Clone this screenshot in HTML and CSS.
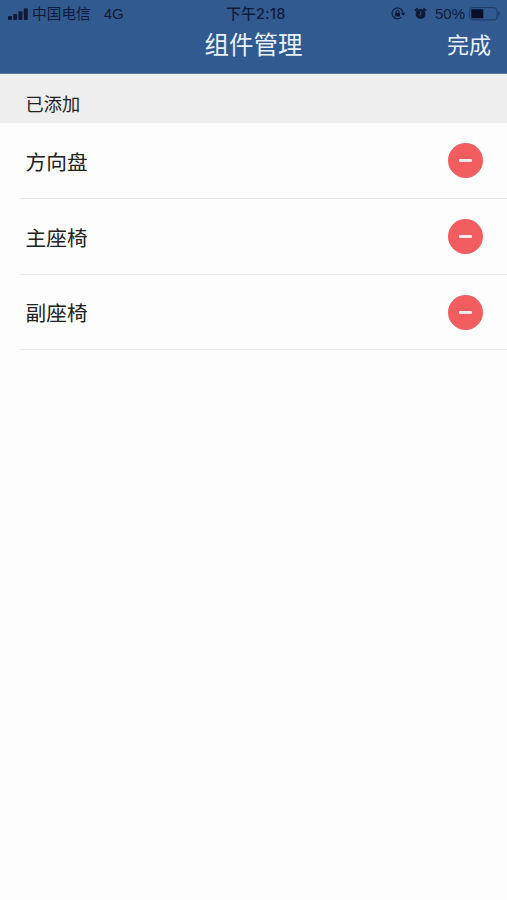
FILE: index.html
```html
<!DOCTYPE html>
<html lang="zh-CN">
<head>
<meta charset="utf-8">
<meta name="viewport" content="width=device-width, initial-scale=1">
<title>组件管理</title>
<link rel="stylesheet" href="styles.css">
</head>
<body>
<header class="header">
  <div class="status">
    <div class="status-left">
      <svg class="signal" width="20" height="12" viewBox="0 0 20 12" fill="currentColor"><rect x="0" y="8" width="4" height="4" rx="1"/><rect x="5.2" y="6" width="4" height="6" rx="1"/><rect x="10.5" y="3.3" width="4" height="8.7" rx="1"/><rect x="15.8" y="0.3" width="4" height="11.7" rx="1"/></svg>
      <span class="carrier">中国电信</span>
      <span class="network">4G</span>
    </div>
    <span class="time">下午2:18</span>
    <div class="status-right">
      <svg class="lock" width="15" height="14" viewBox="0 0 15 14" fill="none" stroke="currentColor"><path d="M10.4 10.2A5.4 5.4 0 1 1 11.9 5.8" stroke-width="1.1"/><path d="M9.8 5.8h4.6l-2.3 3z" fill="currentColor" stroke="none"/><rect x="4" y="5.7" width="5" height="3.8" rx=".5" fill="currentColor" stroke="none"/><path d="M5 6V4.7a1.5 1.5 0 0 1 3 0V6" stroke-width="1"/></svg>
      <svg class="alarm" width="13" height="14" viewBox="0 0 13 14"><circle cx="6.5" cy="6.9" r="5" fill="currentColor"/><path d="M1.5 3.1 3.2 1.7M11.5 3.1 9.8 1.7" stroke="currentColor" stroke-width="1.7" stroke-linecap="round"/><path d="M6.8 4.2v3L5 8.2" fill="none" stroke="#315a91" stroke-width=".9"/></svg>
      <span class="percent">50%</span>
      <svg class="battery" width="32" height="14" viewBox="0 0 32 14"><rect x=".6" y=".6" width="27.5" height="12.3" rx="3" fill="none" stroke="#1d3967" stroke-width="1"/><rect x="2.3" y="2.3" width="12" height="9" rx="1" fill="#080e27"/><path d="M29.5 4.5v4.6q1.5-.6 1.5-2.3t-1.5-2.3" fill="#1d3967"/></svg>
    </div>
  </div>
  <div class="navbar">
    <h1 class="title">组件管理</h1>
    <button class="done">完成</button>
  </div>
</header>
<main>
  <h2 class="section">已添加</h2>
  <ul class="list">
    <li class="row"><span>方向盘</span><button class="remove" aria-label="移除"></button></li>
    <li class="row"><span>主座椅</span><button class="remove" aria-label="移除"></button></li>
    <li class="row"><span>副座椅</span><button class="remove" aria-label="移除"></button></li>
  </ul>
</main>
</body>
</html>
```
FILE: styles.css
```css
* { box-sizing: border-box; }
body {
  margin: 0;
  min-height: 100vh;
  background: #fdfdfd;
  color: #222;
  font-family: "Liberation Sans", "Noto Sans CJK SC", sans-serif;
}
button { border: 0; padding: 0; background: none; font: inherit; }
.header {
  height: 74px;
  background: #315a91;
  border-bottom: 1px solid #61799d;
}
.status {
  display: grid;
  grid-template-columns: 1fr auto 1fr;
  align-items: center;
  height: 27px;
  padding: 0 6px 0 8px;
  color: #101a38;
  font-size: 15px;
  line-height: 27px;
}
.status-left, .status-right { display: flex; align-items: center; height: 27px; }
.status-right { justify-content: flex-end; }
.carrier { padding-top: 1px; margin-left: 4px; font-size: 14.7px; }
.network { margin-left: 13px; font-size: 15px; }
.time {
  padding-left: 3px;
  font-family: Inter, "Noto Sans CJK SC", sans-serif;
  font-size: 14.5px;
  font-weight: 500;
  letter-spacing: .3px;
}
.alarm { margin-left: 8px; }
.percent { margin-left: 8px; }
.battery { margin-left: 4px; }
.navbar {
  display: grid;
  grid-template-columns: 1fr auto 1fr;
  align-items: center;
  height: 38px;
  padding: 0 16px;
  color: #e9f1fa;
}
.title {
  grid-column: 2;
  margin: 0;
  font-size: 24.5px;
  font-weight: 400;
  line-height: 36px;
}
.done {
  justify-self: end;
  color: inherit;
  font-size: 22px;
  line-height: 36px;
}
.section {
  height: 49px;
  margin: 0;
  padding: 13px 25.5px 0;
  background: #eee;
  font-size: 18.2px;
  font-weight: 400;
  line-height: 37px;
}
.list { margin: 0; padding: 0 0 0 20px; list-style: none; }
.row {
  display: flex;
  align-items: center;
  justify-content: space-between;
  height: 75.8px;
  padding: 1px 24px 0 5.5px;
  border-bottom: 1px solid #e9e9e9;
  font-size: 20.7px;
}
.remove {
  display: grid;
  place-items: center;
  width: 35px;
  height: 35px;
  border-radius: 50%;
  background: #f25d60;
}
.remove::before {
  content: "";
  width: 13px;
  height: 3px;
  border-radius: 1px;
  background: #fce9e9;
}
```
